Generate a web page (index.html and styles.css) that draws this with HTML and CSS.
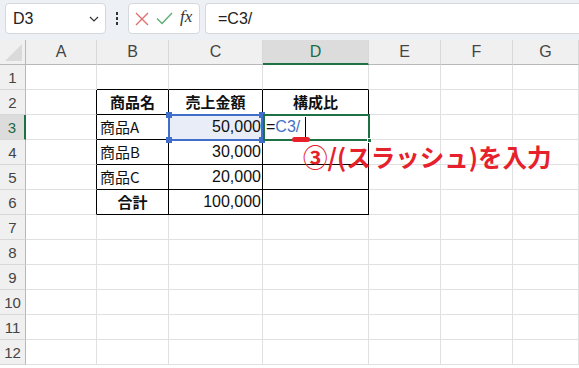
FILE: index.html
```html
<!DOCTYPE html>
<html lang="ja">
<head>
  <meta charset="UTF-8" />
  <title>構成比</title>
  <link rel="stylesheet" href="styles.css">
</head>
<body>

  <div class="formula-bar">
    <div class="name-box">
      <span>D3</span>
      <svg class="chevron" width="10" height="6" viewBox="0 0 10 6"><path d="M1 1l4 4 4-4" fill="none" stroke="#333" stroke-width="1.2"/></svg>
    </div>
    <div class="dots"><i></i><i></i><i></i></div>
    <div class="fx-buttons">
      <svg width="14" height="14" viewBox="0 0 14 14"><path d="M1 1l12 12M13 1L1 13" stroke="#e07070" stroke-width="1.4"/></svg>
      <svg width="17" height="13" viewBox="0 0 17 13"><path d="M1 6.5l5 5L16 1" fill="none" stroke="#5caf72" stroke-width="1.4"/></svg>
      <span class="fx">fx</span>
    </div>
    <div class="formula-input">=C3/</div>
  </div>

  <div class="sheet">
    <div class="hd corner"><span class="tri"></span></div>
    <div class="hd col">A</div>
    <div class="hd col">B</div>
    <div class="hd col">C</div>
    <div class="hd col active">D</div>
    <div class="hd col">E</div>
    <div class="hd col">F</div>
    <div class="hd col">G</div>

    <div class="hd row">1</div>
    <div class="c"></div><div class="c tt"></div><div class="c tt"></div><div class="c tt"></div><div class="c"></div><div class="c"></div><div class="c"></div>

    <div class="hd row">2</div>
    <div class="c tl"></div>
    <div class="c t b center">商品名</div>
    <div class="c t b center">売上金額</div>
    <div class="c t b center">構成比</div>
    <div class="c"></div><div class="c"></div><div class="c"></div>

    <div class="hd row active">3</div>
    <div class="c tl"></div>
    <div class="c t">商品A</div>
    <div class="c t num sel">50,000</div>
    <div class="c t edit">=<span class="ref">C3/</span></div>
    <div class="c"></div><div class="c"></div><div class="c"></div>

    <div class="hd row">4</div>
    <div class="c tl"></div>
    <div class="c t">商品B</div>
    <div class="c t num">30,000</div>
    <div class="c t"></div>
    <div class="c"></div><div class="c"></div><div class="c"></div>

    <div class="hd row">5</div>
    <div class="c tl"></div>
    <div class="c t">商品C</div>
    <div class="c t num">20,000</div>
    <div class="c t"></div>
    <div class="c"></div><div class="c"></div><div class="c"></div>

    <div class="hd row">6</div>
    <div class="c tl"></div>
    <div class="c t b center">合計</div>
    <div class="c t num">100,000</div>
    <div class="c t"></div>
    <div class="c"></div><div class="c"></div><div class="c"></div>

    <div class="hd row">7</div>
    <div class="c"></div><div class="c"></div><div class="c"></div><div class="c"></div><div class="c"></div><div class="c"></div><div class="c"></div>
    <div class="hd row">8</div>
    <div class="c"></div><div class="c"></div><div class="c"></div><div class="c"></div><div class="c"></div><div class="c"></div><div class="c"></div>
    <div class="hd row">9</div>
    <div class="c"></div><div class="c"></div><div class="c"></div><div class="c"></div><div class="c"></div><div class="c"></div><div class="c"></div>
    <div class="hd row">10</div>
    <div class="c"></div><div class="c"></div><div class="c"></div><div class="c"></div><div class="c"></div><div class="c"></div><div class="c"></div>
    <div class="hd row">11</div>
    <div class="c"></div><div class="c"></div><div class="c"></div><div class="c"></div><div class="c"></div><div class="c"></div><div class="c"></div>
    <div class="hd row">12</div>
    <div class="c"></div><div class="c"></div><div class="c"></div><div class="c"></div><div class="c"></div><div class="c"></div><div class="c"></div>

    <!-- selection overlays -->
    <div class="ref-box">
      <i class="h tl"></i><i class="h tr"></i><i class="h bl"></i><i class="h br"></i>
    </div>
    <div class="active-box"><i class="fill-handle"></i></div>
    <div class="caret"></div>
    <div class="mark"></div>
    <div class="note">③/(スラッシュ)を入力</div>
  </div>

</body>
</html>
```

FILE: styles.css
```css
* {
  box-sizing: border-box;
}

body {
  margin: 0;
  width: 579px;
  height: 368px;
  overflow: hidden;
  background: #fff;
  font-family: "Noto Sans CJK JP", "Liberation Sans", sans-serif;
  color: #111;
}

/* formula bar */
.formula-bar {
  height: 40px;
  background: #edf0f4;
  display: flex;
  align-items: flex-start;
  padding: 3px 0 0 5px;
}

.name-box {
  width: 101px;
  height: 31px;
  background: #fff;
  border: 1px solid #d5d8dc;
  border-radius: 4px;
  display: flex;
  align-items: center;
  justify-content: space-between;
  padding: 0 6px 0 7px;
  font-family: "Liberation Sans", sans-serif;
  font-size: 16px;
  color: #222;
}

.dots {
  width: 22px;
  height: 31px;
  display: flex;
  flex-direction: column;
  align-items: center;
  justify-content: center;
  gap: 2px;
}

.dots i {
  width: 2px;
  height: 3px;
  background: #333;
}

.fx-buttons {
  width: 72px;
  height: 31px;
  background: #fff;
  border: 1px solid #d5d8dc;
  border-radius: 4px;
  display: flex;
  align-items: center;
  gap: 7px;
  padding-left: 6px;
}

.fx {
  font-family: "Liberation Serif", serif;
  font-style: italic;
  font-size: 17px;
  color: #333;
  margin-top: -3px;
}

.formula-input {
  flex: 1;
  margin-left: 5px;
  height: 31px;
  background: #fff;
  border: 1px solid #d5d8dc;
  border-right: none;
  border-radius: 4px 0 0 4px;
  padding-left: 12px;
  line-height: 29px;
  font-family: "Liberation Sans", sans-serif;
  font-size: 16px;
  color: #222;
}

/* grid */
.sheet {
  position: relative;
  display: grid;
  grid-template-columns: 26px 71px 72px 94px 106px 72px 72px 66px;
  grid-auto-rows: 25px;
}

.hd {
  background: #f0f0f0;
  font-family: "Liberation Sans", sans-serif;
  font-size: 16px;
  color: #444;
  display: flex;
  align-items: center;
  justify-content: center;
}

.hd.col {
  border-right: 1px solid #d8d8d8;
  border-bottom: 1px solid #b8b8b8;
}

.hd.col.active {
  background: #dcdcdc;
  color: #1c6b45;
  border-bottom: 2px solid #1e7145;
}

.hd.row {
  border-right: 1px solid #b8b8b8;
  border-bottom: 1px solid #d8d8d8;
  font-size: 15px;
}

.hd.row.active {
  background: #dcdcdc;
  color: #1c6b45;
  border-right: 2px solid #1e7145;
}

.corner {
  border-right: 1px solid #b8b8b8;
  border-bottom: 1px solid #b8b8b8;
  position: relative;
}

.corner .tri {
  position: absolute;
  right: 3px;
  bottom: 3px;
  width: 0;
  height: 0;
  border-left: 17px solid transparent;
  border-bottom: 17px solid #dadada;
}

.c {
  border-right: 1px solid #e0e0e0;
  border-bottom: 1px solid #e0e0e0;
  font-size: 15px;
  line-height: 24px;
  padding: 0 3px;
  white-space: nowrap;
}

.c.t {
  border-right-color: #000;
  border-bottom-color: #000;
}

.c.tl {
  border-right-color: #000;
}

.c.tt {
  border-bottom-color: #000;
}

.c.b {
  font-weight: bold;
}

.c.center {
  text-align: center;
}

.c.num {
  text-align: right;
  padding-right: 1px;
  font-family: "Liberation Sans", sans-serif;
  font-size: 16px;
}

.c.sel {
  background: #e8edf8;
}

.c.edit {
  font-family: "Liberation Sans", sans-serif;
  font-size: 16px;
  padding-left: 3px;
}

.ref {
  color: #4472c4;
}

/* overlays */
.ref-box {
  position: absolute;
  left: 168px;
  top: 74px;
  width: 95px;
  height: 27px;
  border: 2px solid #3f6fc8;
}

.ref-box .h {
  position: absolute;
  width: 6px;
  height: 6px;
  background: #3f6fc8;
}

.h.tl { left: -4px; top: -4px; }
.h.tr { right: -4px; top: -4px; }
.h.bl { left: -4px; bottom: -4px; }
.h.br { right: -4px; bottom: -4px; }

.active-box {
  position: absolute;
  left: 263px;
  top: 74px;
  width: 107px;
  height: 27px;
  border: 2px solid #1e7145;
}

.fill-handle {
  position: absolute;
  right: -4px;
  bottom: -4px;
  width: 5px;
  height: 5px;
  background: #1e7145;
  border: 1px solid #fff;
}

.caret {
  position: absolute;
  left: 305px;
  top: 77px;
  width: 1px;
  height: 21px;
  background: #000;
}

.mark {
  position: absolute;
  left: 292px;
  top: 97px;
  width: 18px;
  height: 5px;
  border-radius: 3px;
  background: #e8202a;
}

.note {
  position: absolute;
  left: 303px;
  top: 99px;
  font-size: 24.5px;
  font-weight: bold;
  color: #e6212b;
  white-space: nowrap;
}
```
